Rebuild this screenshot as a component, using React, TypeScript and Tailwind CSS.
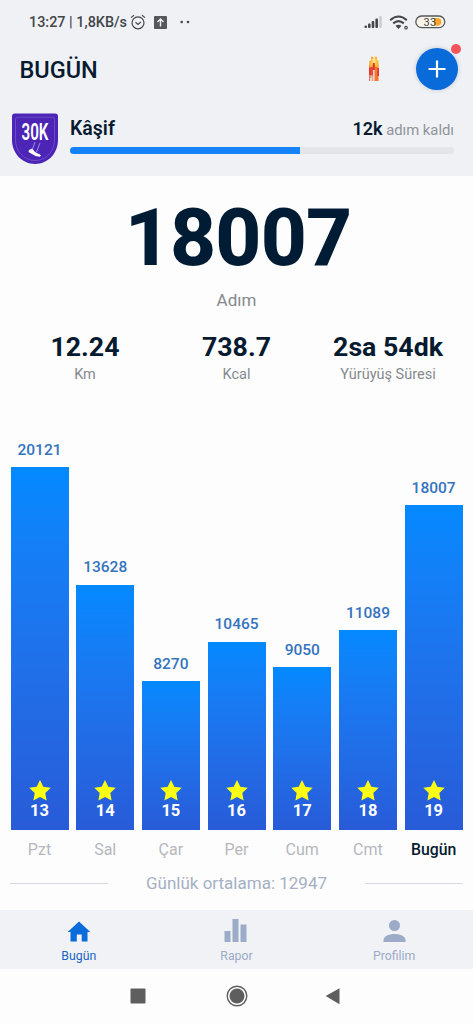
const days = [
  { value: 20121, date: 13, name: "Pzt", height: 362.5 },
  { value: 13628, date: 14, name: "Sal", height: 245 },
  { value: 8270, date: 15, name: "Çar", height: 148.5 },
  { value: 10465, date: 16, name: "Per", height: 188 },
  { value: 9050, date: 17, name: "Cum", height: 162.5 },
  { value: 11089, date: 18, name: "Cmt", height: 199.5 },
  { value: 18007, date: 19, name: "Bugün", height: 324.5 },
];

function StatusBar() {
  return (
    <div className="flex h-[44px] items-center pl-[29px] pr-[28px] text-[#444649]">
      <span className="whitespace-pre pt-px text-[14.4px] font-medium leading-[16px]">13:27 | 1,8KB/s</span>
      <svg className="ml-[3px] h-[16px] w-[16px]" viewBox="0 0 16 16" fill="none" stroke="currentColor" strokeWidth="1.2">
        <circle cx="8" cy="8.8" r="6" />
        <path d="M1 3.6 4 1.2M15 3.6 12 1.2M5.5 8.2 8 10.4l2.8-2.4" />
      </svg>
      <svg className="ml-[8px] h-[13px] w-[13px]" viewBox="0 0 13 13">
        <rect width="13" height="13" rx="1" fill="#55575a" />
        <path d="M6.5 10.5v-7M3.5 6l3-3 3 3" fill="none" stroke="#f0f1f5" strokeWidth="1.4" />
      </svg>
      <svg className="ml-[13px] h-[4px] w-[10px]" viewBox="0 0 10 4" fill="currentColor">
        <circle cx="1.7" cy="2" r="1.3" />
        <circle cx="8" cy="2" r="1.3" />
      </svg>
      <svg className="ml-auto h-[14px] w-[19px]" viewBox="0 0 19 14" fill="currentColor">
        <rect x="0.5" y="10.5" width="2.5" height="2.5" rx="1" />
        <rect x="4" y="8.5" width="2.6" height="4.5" rx="1" />
        <rect x="7.7" y="6" width="2.6" height="7" rx="1" />
        <rect x="11.4" y="3.5" width="2.6" height="9.5" rx="1" />
        <rect x="15.2" y="1" width="2.6" height="12" rx="1" fill="#cccdd1" />
      </svg>
      <svg className="ml-[6px] h-[15px] w-[20px]" viewBox="0 0 20 15" fill="none" stroke="currentColor" strokeWidth="2.1">
        <path d="M1.2 5.2Q9.5-2.2 17.8 5.2M4.2 8.4q5.3-4.5 10.6 0" />
        <path d="M6.5 10.8q3-2.3 6 0L9.5 14z" fill="currentColor" stroke="none" />
        <circle cx="17" cy="12.7" r="1.3" strokeWidth="1.1" />
      </svg>
      <svg className="-mr-px ml-[6px] h-[14px] w-[31px]" viewBox="0 0 31 14">
        <rect x="0.8" y="1" width="29" height="11.6" rx="5.8" fill="#f9f5eb" stroke="#55575a" strokeWidth="1.3" />
        <path d="M19 2.9h3.5a3.9 3.9 0 0 1 0 7.8H19z" fill="#ffa42e" />
        <text x="15" y="10.8" textAnchor="middle" fontSize="11" letterSpacing="0.3" fontWeight="400" fill="#444649">33</text>
      </svg>
    </div>
  );
}

function Header() {
  return (
    <div className="flex h-[54px] items-center pl-[19.5px] pr-[15px]">
      <h1 className="pb-[3px] text-[23.5px] font-medium leading-[28px]">BUGÜN</h1>
      <svg className="ml-auto h-[26px] w-[12px] -translate-y-[2px]" viewBox="0 0 12 26">
        <path d="M1.2 9h4v16h-4z" fill="#e8502f" />
        <path d="M6.5 8.5h4V25h-4z" fill="#f8742c" />
        <path d="M3 .8h2.3V11H1.3V4.5H3z" fill="#fba834" />
        <path d="M6.6.8h2.5v3.7h1.4V11H6.6z" fill="#fbb735" />
        <path d="M3.5 3h1.3v6H3.5zM7.2 3h1.2v6H7.2z" fill="#ffe14d" />
        <path d="M4.8 7h2v7h-2zM1 12h1.5v7H1zM9.5 12H11v8H9.5z" fill="#dc3335" />
        <path d="M2 19.5h2.6V25H2z" fill="#eed3c4" />
        <path d="M2 21h1.5" stroke="#7d716d" strokeWidth="0.7" />
      </svg>
      <button className="relative ml-[36px] flex size-[42px] -translate-y-[2px] items-center justify-center rounded-full bg-[#096bd9] shadow-[0_0_3px_2px_#dadfe7]">
        <svg className="size-[18px]" viewBox="0 0 18 18" stroke="white" strokeWidth="2.2">
          <path d="M9 .5v17M.5 9h17" />
        </svg>
        <span className="absolute -right-[3px] -top-[4px] size-[10px] rounded-full bg-[#f4535b]" />
      </button>
    </div>
  );
}

function Level() {
  return (
    <div className="flex h-[79px] pl-[11px] pr-[19px] pt-[15px]">
      <svg className="h-[53px] w-[48px] shrink-0 overflow-visible" viewBox="0 0 48 53">
        <path d="M4 .5h40q3 0 3 3V27c0 13-10 24-23 24S1 40 1 27V3.500q0-3 3-3z" fill="#4c24b6" />
        <path d="M6.5 4.200h35q2 0 2 2V27c0 11-8 20.500-19.500 20.500S4.500 38 4.500 27V6.200q0-2 2-2z" fill="none" stroke="#7553cd" strokeWidth="0.8" />
        <text transform="translate(24 26.500) scale(.66 1)" textAnchor="middle" fontSize="23" fontWeight="600" fill="white">30K</text>
        <path d="m18 37 3-1.500 3 3.500 5 2.500q2 1.500-.5 2.300l-4-.8-7-4z" fill="white" />
        <path d="m21.500 36 2.500-7m1.500 10 3.500-9" stroke="#b9a6e7" strokeWidth="0.8" />
      </svg>
      <div className="ml-[11px] flex-1 pt-[3px]">
        <div className="flex h-[25px] items-baseline justify-between leading-[24px]">
          <span className="relative top-px text-[19.5px] font-semibold">Kâşif</span>
          <span className="relative top-px text-[14.8px] text-[#8f949b]">
            <b className="text-[18px] font-semibold text-[#061a30]">12k</b> adım kaldı
          </span>
        </div>
        <div className="mt-[6px] h-[7px] overflow-hidden rounded-full bg-[#e4e5e9]">
          <div className="h-full w-[230px] bg-[#1483f7]" />
        </div>
      </div>
    </div>
  );
}

function Stat({ value, label }: { value: string; label: string }) {
  return (
    <div className="w-[151.5px]">
      <div className="text-[26.7px] font-bold leading-[30px]">{value}</div>
      <div className="pt-px text-[14.5px] leading-[23px] text-[#85898d]">{label}</div>
    </div>
  );
}

function Chart() {
  return (
    <div className="flex h-[424px] items-end gap-[7.7px] px-[10.5px]">
      {days.map((day) => {
        const today = day.name === "Bugün";
        return (
          <div key={day.date} className="flex w-[58px] shrink-0 flex-col items-center">
            <span className="mb-[7.5px] text-[15.5px] font-medium leading-[20px] text-[#3474bd]">{day.value}</span>
            <div
              className="flex w-full flex-col items-center justify-end bg-gradient-to-b from-[#0389ff] to-[#285bd8] pb-[8px]"
              style={{ height: day.height }}
            >
              <svg className="h-[21px] w-[22px]" viewBox="0 0 22 21">
                <path d="m11 0 3.3 6.8 7.4 1-5.400 5.300 1.300 7.400L11 17l-6.600 3.500 1.300-7.400L.3 7.800l7.400-1z" fill="#fcff12" />
              </svg>
              <span className="-mt-px text-[16.5px] font-bold leading-[22px] text-white">{day.date}</span>
            </div>
            <span className={today ? "h-[39.5px] text-[15.8px] font-medium leading-[39px]" : "h-[39.5px] text-[16px] leading-[39px] text-[#b5b7bc]"}>{day.name}</span>
          </div>
        );
      })}
    </div>
  );
}

function BottomNav() {
  return (
    <nav className="grid h-[59px] grid-cols-3 bg-[#f0f2f5] pt-[9px] text-center text-[12.3px] leading-[18px] text-[#9cabc8]">
      <div className="flex flex-col items-center text-[#1866c3]">
        <svg className="h-[28px] w-[24px]" viewBox="0 0 24 28">
          <path d="M12 2.500 23.300 13h-2.800v9.500h-5.800v-7H9.800v7H3.500V13H.7z" fill="#0a6bda" />
        </svg>
        <span>Bugün</span>
      </div>
      <div className="flex flex-col items-center">
        <svg className="h-[28px] w-[24px]" viewBox="0 0 24 28" fill="currentColor">
          <path d="M.5 12h6v11h-6zM8.500 0h6v23h-6zM16.500 5.500h6V23h-6z" />
        </svg>
        <span>Rapor</span>
      </div>
      <div className="flex flex-col items-center">
        <svg className="h-[28px] w-[24px]" viewBox="0 0 24 28" fill="currentColor">
          <circle cx="12.5" cy="6.5" r="5.5" />
          <path d="M1.500 23v-2c0-4 6-6 11-6s11 2 11 6v2z" />
        </svg>
        <span>Profilim</span>
      </div>
    </nav>
  );
}

function SystemNav() {
  return (
    <div className="flex h-[53px] items-center justify-center gap-[77.5px] text-[#5e5e5e]">
      <svg className="size-[20px]" viewBox="0 0 20 20"><rect x="2.5" y="2.5" width="15" height="15" rx="0.8" fill="currentColor" /></svg>
      <svg className="size-[22px] shrink-0" viewBox="0 0 22 22">
        <circle cx="11" cy="11" r="9.8" fill="none" stroke="currentColor" strokeWidth="1.4" />
        <circle cx="11" cy="11" r="7.5" fill="currentColor" />
      </svg>
      <svg className="size-[20px]" viewBox="0 0 20 20"><path d="M.7 10 14.500 2.300v16z" fill="currentColor" /></svg>
    </div>
  );
}

export default function App() {
  return (
    <main className="h-[1024px] w-[473px] overflow-hidden bg-[#fdfdfd] font-[Roboto,sans-serif] text-[#061a30]">
      <header className="h-[176px] bg-[#f0f1f5]">
        <StatusBar />
        <Header />
        <Level />
      </header>
      <section className="h-[269px] text-center">
        <div className="pl-[3px] pt-[13px] text-[80px] font-extrabold leading-[98px] tracking-[-0.8px] text-[#001c35]">18007</div>
        <div className="mt-[1px] text-[17px] leading-[24px] text-[#85898d]">Adım</div>
        <div className="mt-[20px] flex justify-center">
          <Stat value="12.24" label="Km" />
          <Stat value="738.7" label="Kcal" />
          <Stat value="2sa 54dk" label="Yürüyüş Süresi" />
        </div>
      </section>
      <Chart />
      <div className="flex h-[41px] items-center justify-between px-[10px] pb-[12px] text-[17px] text-[#a5b0c4]">
        <span className="h-px w-[98px] bg-[#d5d9dd]" />
        <span>Günlük ortalama: 12947</span>
        <span className="h-px w-[98px] bg-[#d5d9dd]" />
      </div>
      <BottomNav />
      <SystemNav />
    </main>
  );
}
